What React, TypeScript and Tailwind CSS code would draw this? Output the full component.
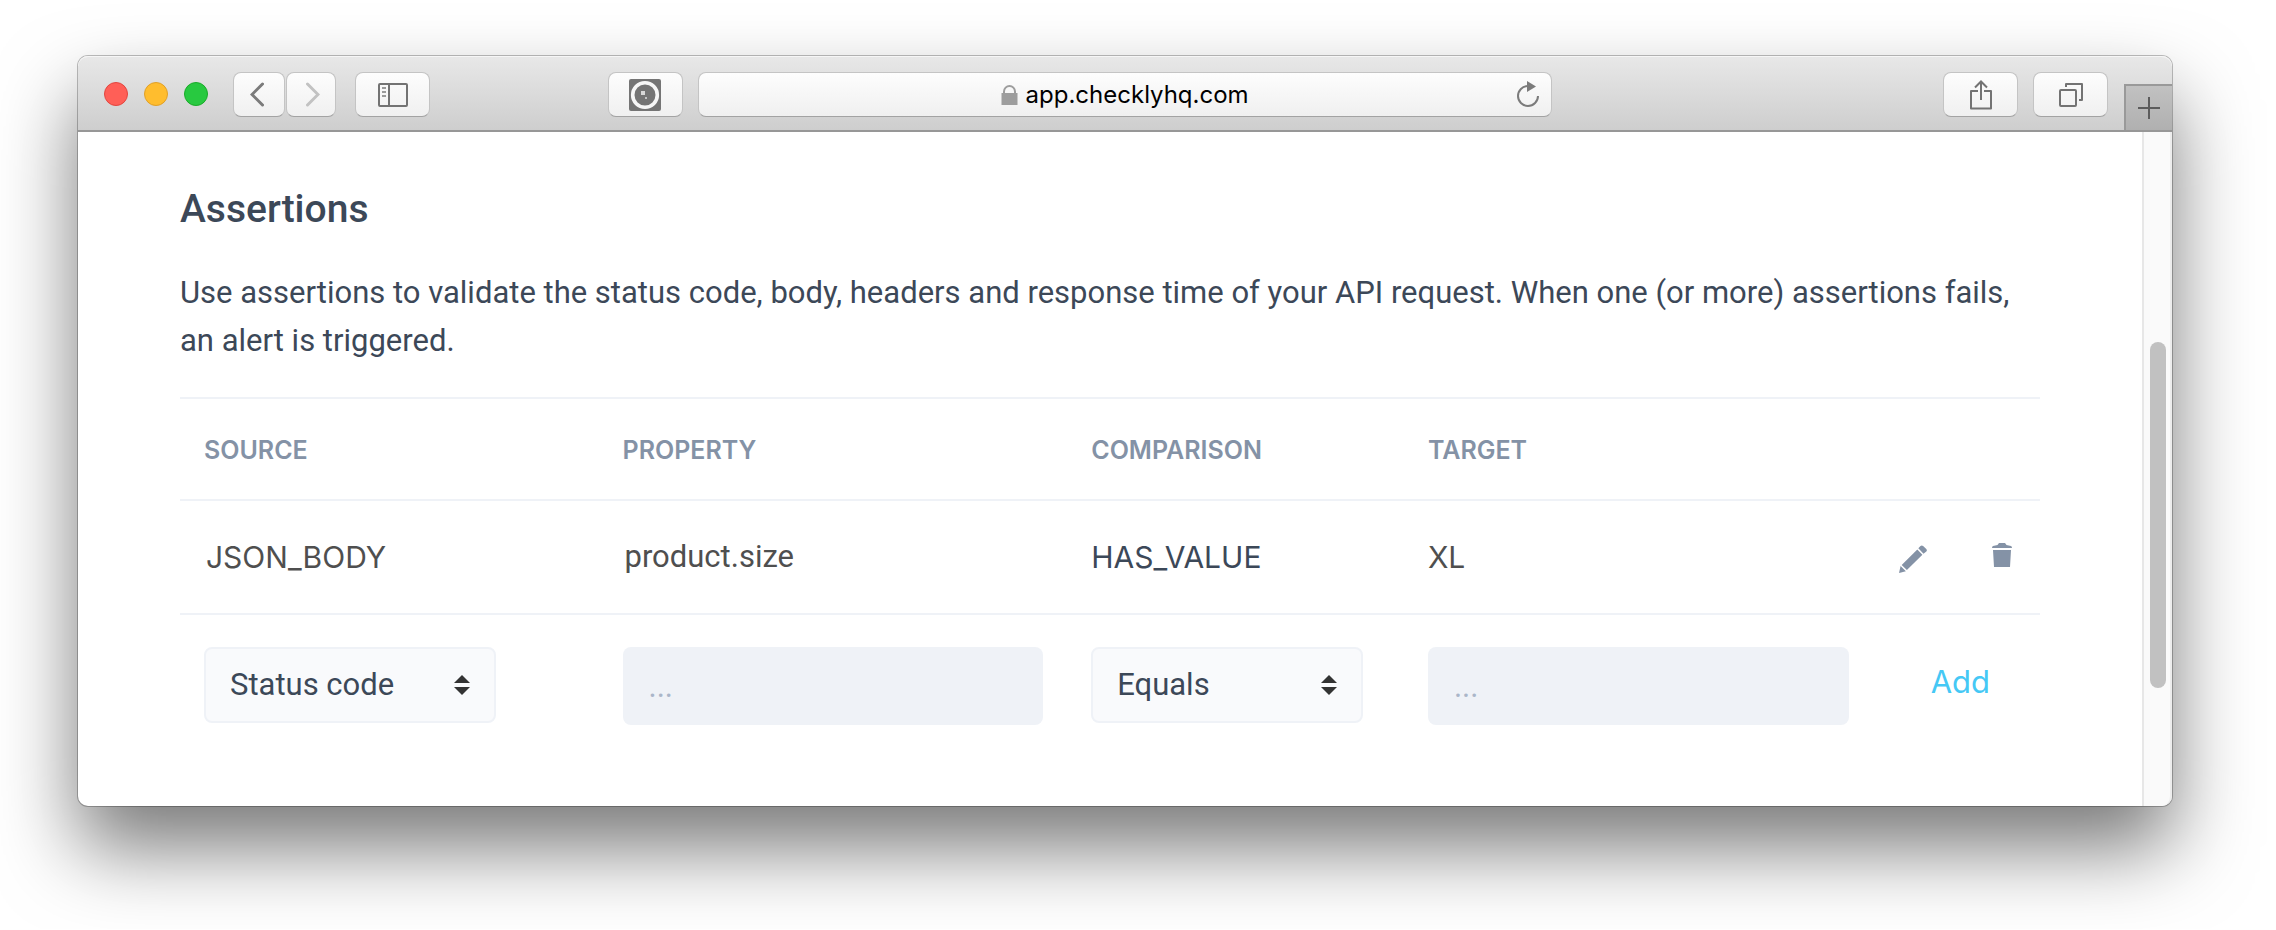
import type { ReactNode } from "react";

function ToolbarButton({ label, className, children }: { label: string; className: string; children: ReactNode }) {
  return (
    <button
      type="button"
      aria-label={label}
      className={`flex h-[45px] shrink-0 items-center justify-center rounded-[8px] border border-[#c4c4c4] border-b-[#a3a3a3] bg-linear-to-b from-[#fdfdfd] to-[#f0f0f0] ${className}`}
    >
      {children}
    </button>
  );
}

function TrafficLights() {
  return (
    <div className="flex shrink-0 gap-4 pt-[10px]">
      <button type="button" aria-label="Close" className="size-6 rounded-full border border-[#e2463f] bg-[#ff5f57]" />
      <button type="button" aria-label="Minimize" className="size-6 rounded-full border border-[#e0a028] bg-[#ffbd2e]" />
      <button type="button" aria-label="Zoom" className="size-6 rounded-full border border-[#1aab29] bg-[#28c940]" />
    </div>
  );
}

function AddressBar() {
  return (
    <div className="flex h-[45px] min-w-0 flex-[831] items-center rounded-[8px] border border-[#c4c4c4] border-b-[#a3a3a3] bg-linear-to-b from-[#fdfdfd] to-[#f0f0f0] px-[11px]">
      <span className="w-6 shrink-0" />
      <div className="flex min-w-0 flex-1 items-center justify-center gap-2">
        <svg width="17" height="20" viewBox="0 0 17 20" aria-hidden="true">
          <path d="M3 9V6.500a5.500 5.500 0 0 1 11 0V9" fill="none" stroke="#9d9d9d" strokeWidth="2" />
          <rect x="0.5" y="8" width="16" height="12" fill="#9d9d9d" />
        </svg>
        <input
          aria-label="Address"
          defaultValue="app.checklyhq.com"
          className="w-[224px] bg-transparent font-[Inter,sans-serif] text-[24px] leading-8 text-black outline-none"
        />
      </div>
      <button type="button" aria-label="Reload" className="shrink-0">
        <svg width="24" height="28" viewBox="0 0 24 28" fill="none" aria-hidden="true">
          <path d="M22 15a10 10 0 1 1-10-10" stroke="#7b7b7b" strokeWidth="2" />
          <path d="M11 0v11l9-5.500z" fill="#7b7b7b" />
        </svg>
      </button>
    </div>
  );
}

function Toolbar() {
  return (
    <header className="flex h-[76px] items-start rounded-t-[10px] border-b-2 border-[#979797] bg-linear-to-b from-[#e8e8e8] to-[#cecece] pt-4 pl-[26px] shadow-[inset_0_1px_0_#f6f6f6]">
      <TrafficLights />
      <div className="ml-[25px] flex shrink-0 gap-px">
        <ToolbarButton label="Back" className="w-[52px] pr-1">
          <svg width="14" height="25" viewBox="0 0 14 25" fill="none" aria-hidden="true">
            <path d="M12.500 2 2 12.500 12.500 23" stroke="#7b7b7b" strokeWidth="3" strokeLinecap="round" />
          </svg>
        </ToolbarButton>
        <ToolbarButton label="Forward" className="w-[50px] pl-1">
          <svg width="14" height="25" viewBox="0 0 14 25" fill="none" aria-hidden="true">
            <path d="M1.500 2 12 12.500 1.500 23" stroke="#c2c2c2" strokeWidth="3" strokeLinecap="round" />
          </svg>
        </ToolbarButton>
      </div>
      <ToolbarButton label="Show sidebar" className="ml-[19px] w-[75px]">
        <svg width="30" height="24" viewBox="0 0 30 24" fill="none" aria-hidden="true">
          <rect x="1" y="1" width="28" height="22" rx="1" stroke="#737373" strokeWidth="2" />
          <path d="M11 1v22" stroke="#737373" strokeWidth="2" />
          <path d="M4 5h4M4 9h4M4 13h4" stroke="#9a9a9a" strokeWidth="2" />
        </svg>
      </ToolbarButton>
      <span className="min-w-2 flex-[178]" />
      <ToolbarButton label="Extension" className="mr-[15px] w-[75px]">
        <svg width="32" height="32" viewBox="0 0 32 32" aria-hidden="true">
          <rect width="32" height="32" rx="2" fill="#757575" />
          <circle cx="16" cy="16" r="12.300" fill="none" stroke="#f7f7f7" strokeWidth="3.600" />
          <rect x="12" y="12" width="4" height="4" fill="#d8d8d8" />
          <rect x="16" y="18" width="2" height="2" fill="#c4c4c4" />
        </svg>
      </ToolbarButton>
      <AddressBar />
      <span className="min-w-2 flex-[391]" />
      <ToolbarButton label="Share" className="w-[75px]">
        <svg width="22" height="30" viewBox="0 0 22 30" fill="none" stroke="#737373" strokeWidth="2" aria-hidden="true">
          <path d="M8 11H1v17.500h20V11h-7" strokeLinejoin="round" />
          <path d="M11 20V2M5 7.500l6-6 6 6" />
        </svg>
      </ToolbarButton>
      <ToolbarButton label="Show all tabs" className="ml-[15px] w-[75px]">
        <svg width="24" height="24" viewBox="0 0 24 24" fill="none" stroke="#737373" strokeWidth="2" aria-hidden="true">
          <rect x="1" y="7" width="16" height="16" rx="1" />
          <path d="M7 4V1h16v16h-3" strokeLinejoin="round" />
        </svg>
      </ToolbarButton>
      <button
        type="button"
        aria-label="New tab"
        className="ml-4 flex h-[46px] w-[48px] shrink-0 items-center justify-center self-end border-t-2 border-l-2 border-[#999999] bg-linear-to-b from-[#c1c1c1] to-[#b0b0b0]"
      >
        <svg width="22" height="22" viewBox="0 0 22 22" stroke="#5c5c5c" strokeWidth="2" aria-hidden="true">
          <path d="M11 0v22M0 11h22" />
        </svg>
      </button>
    </header>
  );
}

function SelectField({ label, options, className }: { label: string; options: string[]; className: string }) {
  return (
    <div className={`relative mb-[2px] max-w-full ${className}`}>
      <select
        aria-label={label}
        className="h-[76px] w-full appearance-none rounded-[8px] border-2 border-[#eff2f7] bg-[#f9fafc] pr-12 pl-6 text-[31px] text-[#3c4858] outline-none"
      >
        {options.map((o) => (
          <option key={o}>{o}</option>
        ))}
      </select>
      <svg className="pointer-events-none absolute top-7 right-[26px]" width="16" height="20" viewBox="0 0 16 20" aria-hidden="true">
        <path d="M8 0l8 8H0zM8 20l8-8H0z" fill="#333333" />
      </svg>
    </div>
  );
}

function TextField({ label }: { label: string }) {
  return (
    <input
      type="text"
      aria-label={label}
      placeholder="..."
      className="block h-[78px] w-full rounded-[8px] bg-[#eff2f7] px-[26px] text-[31px] text-[#3c4858] outline-none placeholder:text-[#aab6c9]"
    />
  );
}

function AssertionsTable() {
  return (
    <table className="mt-8 w-full table-fixed border-collapse text-left">
      <colgroup>
        <col className="w-[22.5%]" />
        <col className="w-[25.2%]" />
        <col className="w-[18.1%]" />
        <col className="w-[25.2%]" />
        <col className="w-[9%]" />
      </colgroup>
      <thead>
        <tr className="h-[102px] border-y-2 border-[#eff2f7] font-[Inter,sans-serif] text-[25px] text-[#8492a6]">
          <th scope="col" className="px-6 pt-1 font-semibold">SOURCE</th>
          <th scope="col" className="px-6 pt-1 font-semibold">PROPERTY</th>
          <th scope="col" className="px-6 pt-1 font-semibold">COMPARISON</th>
          <th scope="col" className="px-6 pt-1 font-semibold">TARGET</th>
          <td />
        </tr>
      </thead>
      <tbody>
        <tr className="h-[114px] border-b-2 border-[#eff2f7] text-[31px] text-[#4f4f4f]">
          <td className="px-[26px] font-[Inter,sans-serif] text-[30px]">JSON_BODY</td>
          <td className="px-[26px]">product.size</td>
          <td className="px-6 font-[Inter,sans-serif] text-[30px] text-[#3c4858]">HAS_VALUE</td>
          <td className="px-6 font-[Inter,sans-serif] text-[30px]">XL</td>
          <td className="pr-7">
            <div className="flex items-center justify-end gap-[65px]">
              <button type="button" aria-label="Edit assertion" className="pt-1">
                <svg width="28" height="28" viewBox="0 0 28 28" fill="#8492a6" aria-hidden="true">
                  <path d="M19.300 3.300 21.500 1a2 2 0 0 1 2.600 0L27.300 4a2 2 0 0 1 0 2.600L24.500 8.800zM18.300 4.400 23.400 9.700 7.900 25.100 2.700 19.900zM1.600 21 6.900 26.200 0 28z" />
                </svg>
              </button>
              <button type="button" aria-label="Delete assertion" className="pb-1">
                <svg width="20" height="24" viewBox="0 0 20 24" fill="#8492a6" aria-hidden="true">
                  <path d="M7 0h6l1.500 2 4.500 1q1 .5 1 2H0q0-1.500 1-2l4.500-1zM1 7h18l-1 17H2z" />
                </svg>
              </button>
            </div>
          </td>
        </tr>
        <tr>
          <td className="px-6 pt-8">
            <SelectField label="Source" options={["Status code", "JSON body", "Headers", "Response time"]} className="w-[292px]" />
          </td>
          <td className="px-6 pt-8">
            <TextField label="Property" />
          </td>
          <td className="px-6 pt-8">
            <SelectField label="Comparison" options={["Equals", "Not equals", "Has value", "Contains"]} className="w-[272px]" />
          </td>
          <td className="px-6 pt-8">
            <TextField label="Target" />
          </td>
          <td className="pt-6 pr-[50px] text-right">
            <button type="button" className="font-[Inter,sans-serif] text-[31px] text-[#45c8f5]">Add</button>
          </td>
        </tr>
      </tbody>
    </table>
  );
}

export default function App() {
  return (
    <div className="overflow-hidden bg-white pt-14 pr-[104px] pb-[123px] pl-[78px] font-[Roboto,sans-serif]">
      <div className="rounded-[10px] bg-white shadow-[0_0_0_1px_rgba(0,0,0,0.25),0_42px_80px_rgba(0,0,0,0.53)]">
        <Toolbar />
        <div className="flex">
          <main className="min-w-0 flex-1 px-[102px] pt-[53px] pb-[81px] text-[#3c4858]">
            <h1 className="text-[39px] leading-[48px] font-medium">Assertions</h1>
            <p className="mt-9 text-[31px] leading-[48px]">
              Use assertions to validate the status code, body, headers and response time of your API request. When one (or more) assertions fails, an alert is triggered.
            </p>
            <AssertionsTable />
          </main>
          <div className="w-[30px] shrink-0 rounded-br-[10px] border-x-2 border-l-[#e7e7e7] border-r-[#ededed] bg-[#fafafa] px-[6px] pt-[210px]">
            <div className="h-[346px] w-4 rounded-full bg-[#c1c1c1]" />
          </div>
        </div>
      </div>
    </div>
  );
}
